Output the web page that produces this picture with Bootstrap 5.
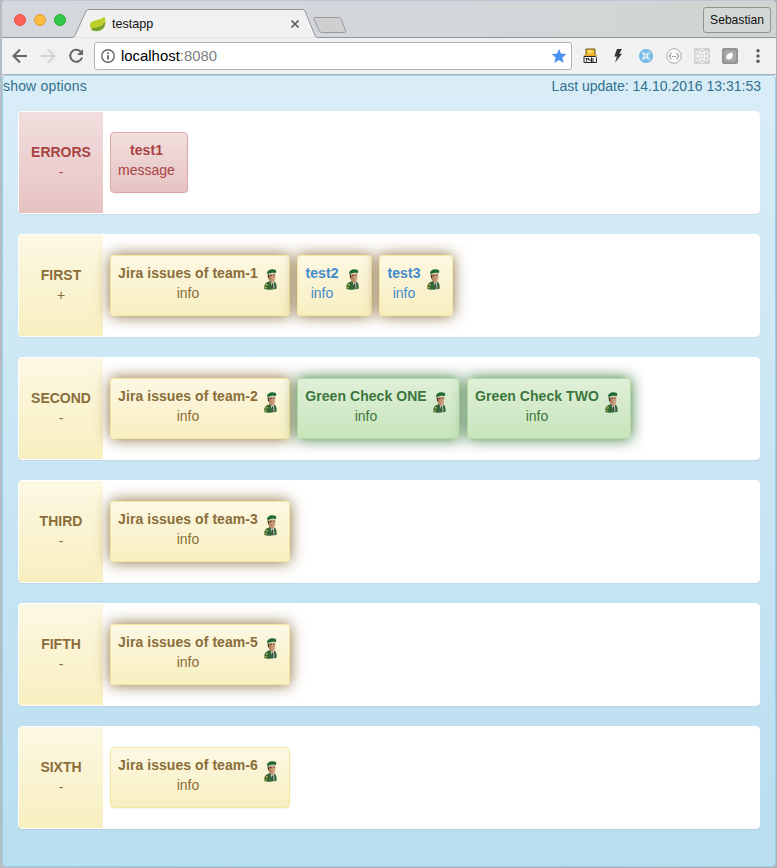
<!DOCTYPE html>
<html lang="en">
<head>
<meta charset="utf-8">
<title>testapp</title>
<link href="https://cdn.jsdelivr.net/npm/bootstrap@5.3.0/dist/css/bootstrap.min.css" rel="stylesheet">
<style>
body{width:777px;height:868px;overflow:hidden;font:14px/20px "Liberation Sans",Arial,sans-serif;background:linear-gradient(90deg,#b4bcc4,#a9b0b4);}
.window{width:774px;height:867px;margin:0 1px 0 2px;border-radius:5px;overflow:hidden;background:#f1f1f1}
.tabstrip{height:38px;background:linear-gradient(90deg,#d4d7db 0,#d3d6da 60%,#cfd5d0 100%);border-top:1px solid #b9c8d6}
.tabstrip svg.frame{left:0;top:-1px}
.light{width:12px;height:12px;border-radius:50%;border:1px solid}
.light-r{background:#fc605b;border-color:#e2504b}
.light-y{background:#fdbc40;border-color:#dfa038}
.light-g{background:#34c84a;border-color:#27ab37}
.lights{gap:8px;padding-left:12px;width:88px}
.tab-label{width:210px;height:28px;margin-top:9px;font-size:12.6px;color:#111}
.tab-title{margin-left:6px}
.user-btn{width:68px;height:26px;margin:6px 5px 0 auto;border:1px solid #8f9491;border-radius:3px;font-size:12.1px;color:#111;background:#d3d8d4}
.toolbar{height:37px;border-bottom:1px solid #b2b2b5;background:#f1f1f1}
.address{width:478px;height:28px;border:1px solid #b3b3b3;border-radius:3px;font-size:14.9px;margin-left:10px;padding:0 4px 0 6px}
.host{margin-left:6px}
.port{color:#808080}
.page{height:792px;border:1px solid #9acfea;border-radius:4px;background:linear-gradient(#d9edf7,#b9def0);color:#31708f;box-shadow:inset 0 1px 0 rgba(255,255,255,.25)}
.page-head{height:35px;padding-right:14px}
.opts{letter-spacing:.18px}
.group{width:742px;height:103px;margin:0 0 20px 15px;border:1px solid #fff;border-radius:4px;background:#fff;box-shadow:0 1px 1px rgba(0,0,0,.05)}
.group-name{width:84px;padding-top:30px}
.checks{padding:20px 0 0 7px;gap:7px}
.check{height:61px;padding:7px 0 0 7px;border:1px solid;border-radius:4px;box-shadow:inset 0 1px 0 rgba(255,255,255,.25),0 1px 2px rgba(0,0,0,.05);gap:5px}
.check b{letter-spacing:.06px}
.soldier{margin-top:5px}
.danger-tone{background:linear-gradient(#f2dede,#e7c3c3);color:#a94442;border-color:#dca7a7}
.warn-tone{background:linear-gradient(#fcf8e3,#f8efc0);color:#8a6d3b;border-color:#f5e79e}
.ok-tone{background:linear-gradient(#dff0d8,#c8e5bc);color:#3c763d;border-color:#b2dba1}
.glow.warn-tone{box-shadow:0 0 15px #8a6d3b}
.glow.ok-tone{box-shadow:0 0 15px #3c763d}
.linked{color:#428bca}
.w-msg{width:78px}.w-jira{width:180px}.w-two{width:75px}.w-three{width:74px}.w-one{width:163px}.w-gtwo{width:164px}
.t-msg{width:57px}.t-jira{width:140px}.t-short{width:34px}.t-two{margin-right:1px}.t-one{width:122px}.t-gtwo{width:124px}
</style>
<script src="https://cdn.jsdelivr.net/npm/bootstrap@5.3.0/dist/js/bootstrap.bundle.min.js"></script>
</head>
<body>
<svg width="0" height="0" class="position-absolute">
<defs>
<linearGradient id="face"><stop offset="0" stop-color="#a5744f"/><stop offset="1" stop-color="#d9b090"/></linearGradient>
<symbol id="soldier" viewBox="0 0 16 22">
<path d="M1.300 21C1 18 1.800 15.200 4 14.200L7 13l4 .6c2 .8 2.800 3 2.700 7-2 1.200-9.500 1.500-12.400.4z" fill="#33673a"/>
<path d="M7.800 14.500l3-.8.600 6-1.400 1.300z" fill="#dfe0da"/>
<path d="M9 15.500h1.200l.3 4.500-1.200.8z" fill="#2c3a30"/>
<path d="M5.200 6l7-.9.200 4.100c-.3 3.200-1.300 5.300-3 5.500-2.100-.3-3.800-2.600-4.200-5z" fill="url(#face)"/>
<path d="M4.500 6h1.900L6 10l-1 .3z" fill="#4c3425"/>
<path d="M7 7.400h1.700m1.500-.2h1.600" stroke="#5b3c2a" stroke-width=".9"/>
<path d="M4 4.900C4.100 2.800 6.500 1.400 9 1.200c2.400-.1 4.500.7 4.300 2.100l-.6 1.900c-2.700-.9-5-.5-7.700 1.100z" fill="#1f6a32"/>
<path d="M5 6.300c2.500-1.500 5-1.700 7.500-1.100v.9c-2.400-.6-4.600-.4-6.800.9z" fill="#dedbcc"/>
<path d="M2.600 16.500l1.600-.7.800 1.200-1.800 1zM1.400 19l2.400.3v1H1.300z" fill="#c9b040"/>
</symbol>
</defs>
</svg>
<div class="window">
  <div class="tabstrip d-flex position-relative">
    <svg class="frame position-absolute" width="774" height="38" fill="none">
      <path d="M0 37.500H69.500Q72 37.500 73 35.500L84 11Q85 9.500 87 9.500H300Q302 9.500 303 11L313 35.500Q314 37.500 316 37.500H774" fill="#f1f1f1" stroke="#929598"/>
      <path d="M312.500 17.500h24q2 0 3 2l4 11q1 2-1.500 2H320q-2 0-3-2l-5-11q-1-2 .5-2z" fill="#cfcfcf" stroke="#999c9f"/>
    </svg>
    <div class="lights d-flex align-items-center position-relative"><span class="light light-r"></span><span class="light light-y"></span><span class="light light-g"></span></div>
    <div class="tab-label d-flex align-items-center position-relative">
      <svg width="16" height="16" viewBox="0 0 16 16"><path d="M14.300.5C16.300 5 16 14.500 8 15 2.500 15 0 13 0 9.700 0 2.500 10.500 5.500 14.300.5z" fill="#bfd02c"/><path d="M15.300 6C13 11.500 8 12 2 12.500c-1 .2-.7 1.800 1 2.200C10 16.500 15.500 13 15.300 6z" fill="#7fa832"/><path d="M14.500 7c-2.500 5-6.500 5-12 6" stroke="#4e8a3a" fill="none"/></svg>
      <span class="tab-title">testapp</span>
      <svg class="ms-auto" width="10" height="10"><path d="M1.500 1.500l7 7m0-7l-7 7" stroke="#585858" stroke-width="1.700"/></svg>
    </div>
    <div class="user-btn d-flex align-items-center justify-content-center position-relative">Sebastian</div>
  </div>
  <div class="toolbar d-flex align-items-center">
    <svg width="82" height="28" fill="none" stroke-width="2"><path d="M25 14H12M18 7.500L11.500 14l6.500 6.500" stroke="#656565"/><path d="M39 14h13M46 7.500l6.500 6.500-6.500 6.500" stroke="#d2d2d2"/><path d="M78.500 9.500A6 6 0 1 0 80 15.500" stroke="#656565"/><path d="M81 7v6h-6z" fill="#656565"/></svg>
    <div class="address d-flex align-items-center bg-white">
      <svg width="14" height="14" fill="none"><circle cx="7" cy="7" r="6.200" stroke="#626262" stroke-width="1.400"/><path d="M7 6.200v4.300M7 3.500v1.600" stroke="#555" stroke-width="1.700"/></svg>
      <span class="text-black me-auto host">localhost<span class="port">:8080</span></span>
      <svg width="16" height="16" viewBox="0 0 16 16"><path d="M8 .8l2.100 4.900 5.300.4-4 3.500 1.200 5.300L8 12.100l-4.600 2.800 1.200-5.300-4-3.500 5.300-.4z" fill="#4b8ff0"/></svg>
    </div>
    <svg width="202" height="28" viewBox="571.5 42 202 28" fill="none">
      <path d="M585.500 49h9v7h-9z" fill="#f2bd2b" stroke="#6f521a"/><path d="M587 50.500h5v2h-5z" fill="#ffe98a"/><path d="M583 55h13.500v1.500H583z" fill="#e7a629"/><path d="M583.500 56.500h11.500l1 1v5h-12.500z" fill="#f4f4f4" stroke="#272727"/><path d="M585 58.500h2.200m-1.100 0v3m4.900-4v4.500m-2.500-2h2m2-2v4m-4.500-4v2" stroke="#222"/>
      <path d="M616.500 49h5l-2.700 4.800h2.700l-7 9 2-6.300h-2.700z" fill="#353535"/>
      <circle cx="645.500" cy="56" r="7" fill="#71b8e7"/><path d="M644.200 54.700h2.600v2.600h-2.600zM644.200 54.700H643a1.200 1.200 0 1 1 1.200-1.200zM646.800 54.700v-1.200a1.200 1.200 0 1 1 1.200 1.200zM646.800 57.300h1.200a1.200 1.200 0 1 1-1.200 1.200zM644.200 57.300v1.200a1.200 1.200 0 1 1-1.200-1.200z" stroke="#fff"/>
      <circle cx="673.500" cy="56" r="7.300" fill="#fafafa" stroke="#aaa"/><path d="M671 53q-1.500 0-1.300 1.700.2 1.300-1 1.300 1.200 0 1 1.400-.2 1.600 1.300 1.600M676 53q1.500 0 1.300 1.700-.2 1.300 1 1.300-1.200 0-1 1.400.2 1.600-1.300 1.600" stroke="#888"/><path d="M671.500 56.500h4" stroke="#888" stroke-dasharray="1 .5"/>
      <path d="M693.500 48h16v16h-16z" fill="#d2d2d2"/><g stroke="#f5f5f5" transform="translate(701.500 56) rotate(90)"><ellipse rx="7" ry="2.700"/><ellipse rx="7" ry="2.700" transform="rotate(60)"/><ellipse rx="7" ry="2.700" transform="rotate(120)"/><circle r="1" fill="#f5f5f5"/></g>
      <rect x="721.500" y="48" width="16" height="16" rx="2" fill="#949494"/><rect x="723.500" y="50" width="12" height="12" rx="3" fill="#a8a8a8"/><path d="M732 52.500q1.500 6.500-3.500 7-3-.2-2.700-3 .8-3.500 6.200-4z" fill="#fff"/>
      <g fill="#5c5c5c"><circle cx="757.500" cy="50.800" r="1.700"/><circle cx="757.500" cy="56" r="1.700"/><circle cx="757.500" cy="61.200" r="1.700"/></g>
    </svg>
  </div>
  <main class="page">
    <div class="page-head d-flex justify-content-between"><span class="opts">show options</span><span>Last update: 14.10.2016 13:31:53</span></div>
    <section class="group d-flex">
      <div class="group-name danger-tone text-center"><b>ERRORS</b><div>-</div></div>
      <div class="checks d-flex align-items-start"><div class="check w-msg danger-tone"><div class="t-msg text-center"><b>test1</b><div>message</div></div></div></div>
    </section>
    <section class="group d-flex">
      <div class="group-name warn-tone text-center"><b>FIRST</b><div>+</div></div>
      <div class="checks d-flex align-items-start">
        <div class="check glow w-jira warn-tone d-flex"><div class="t-jira text-center text-nowrap"><b>Jira issues of team-1</b><div>info</div></div><svg class="soldier" width="16" height="22"><use href="#soldier"/></svg></div>
        <div class="check glow w-two warn-tone d-flex"><div class="t-short t-two linked text-center"><b>test2</b><div>info</div></div><svg class="soldier" width="16" height="22"><use href="#soldier"/></svg></div>
        <div class="check glow w-three warn-tone d-flex"><div class="t-short linked text-center"><b>test3</b><div>info</div></div><svg class="soldier" width="16" height="22"><use href="#soldier"/></svg></div>
      </div>
    </section>
    <section class="group d-flex">
      <div class="group-name warn-tone text-center"><b>SECOND</b><div>-</div></div>
      <div class="checks d-flex align-items-start">
        <div class="check glow w-jira warn-tone d-flex"><div class="t-jira text-center text-nowrap"><b>Jira issues of team-2</b><div>info</div></div><svg class="soldier" width="16" height="22"><use href="#soldier"/></svg></div>
        <div class="check glow w-one ok-tone d-flex"><div class="t-one text-center text-nowrap"><b>Green Check ONE</b><div>info</div></div><svg class="soldier" width="16" height="22"><use href="#soldier"/></svg></div>
        <div class="check glow w-gtwo ok-tone d-flex"><div class="t-gtwo text-center text-nowrap"><b>Green Check TWO</b><div>info</div></div><svg class="soldier" width="16" height="22"><use href="#soldier"/></svg></div>
      </div>
    </section>
    <section class="group d-flex">
      <div class="group-name warn-tone text-center"><b>THIRD</b><div>-</div></div>
      <div class="checks d-flex align-items-start"><div class="check glow w-jira warn-tone d-flex"><div class="t-jira text-center text-nowrap"><b>Jira issues of team-3</b><div>info</div></div><svg class="soldier" width="16" height="22"><use href="#soldier"/></svg></div></div>
    </section>
    <section class="group d-flex">
      <div class="group-name warn-tone text-center"><b>FIFTH</b><div>-</div></div>
      <div class="checks d-flex align-items-start"><div class="check glow w-jira warn-tone d-flex"><div class="t-jira text-center text-nowrap"><b>Jira issues of team-5</b><div>info</div></div><svg class="soldier" width="16" height="22"><use href="#soldier"/></svg></div></div>
    </section>
    <section class="group d-flex">
      <div class="group-name warn-tone text-center"><b>SIXTH</b><div>-</div></div>
      <div class="checks d-flex align-items-start"><div class="check w-jira warn-tone d-flex"><div class="t-jira text-center text-nowrap"><b>Jira issues of team-6</b><div>info</div></div><svg class="soldier" width="16" height="22"><use href="#soldier"/></svg></div></div>
    </section>
  </main>
</div>
</body>
</html>
